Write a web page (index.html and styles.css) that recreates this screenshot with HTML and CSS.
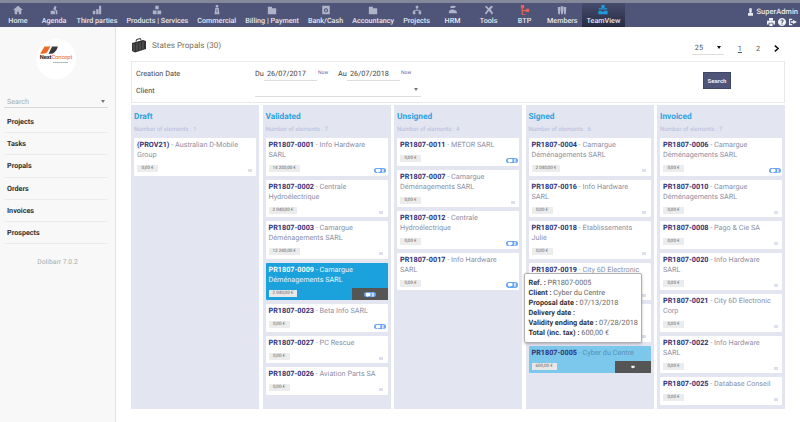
FILE: index.html
```html
<!DOCTYPE html>
<html lang="en">
<head>
<meta charset="utf-8">
<title>States Propals</title>
<link rel="stylesheet" href="styles.css">
</head>
<body>
<svg class="defs" width="0" height="0">
  <symbol id="chat" viewBox="0 0 12 6"><rect x="1.5" y="1" width="5" height="3.4" rx="1" fill="#fff"/><path d="M3 4h2L3 5.600z" fill="#fff"/><rect x="8.500" y="1" width="1.400" height="4" fill="#fff"/></symbol>
</svg>
<header class="nav">
  <a class="nav-item"><svg class="ni" viewBox="0 0 12 12"><path d="M6 1 0 6h2v5h3V8h2v3h3V6h2z"/></svg><span>Home</span></a>
  <a class="nav-item"><svg class="ni" viewBox="0 0 12 12"><path d="M2 7h5v4H2zM5 5l2-4 2 1-1 3 2 2v4H8V7z"/></svg><span>Agenda</span></a>
  <a class="nav-item"><svg class="ni" viewBox="0 0 12 12"><path d="M1 7h3v4H1zM5 5h3v6H5zM8.500 1H11v10H8.500z"/></svg><span>Third parties</span></a>
  <a class="nav-item"><svg class="ni" viewBox="0 0 12 12"><path d="M4 1h4v4H4zM1 6.500h4.500V11H1zM6.500 6.500H11V11H6.500z"/></svg><span>Products | Services</span></a>
  <a class="nav-item"><svg class="ni" viewBox="0 0 12 12"><path d="M4.500 0h3v3h-3zM4 3.500h4L9 11H3zM5.500 5v4h1V5z"/></svg><span>Commercial</span></a>
  <a class="nav-item"><svg class="ni" viewBox="0 0 12 12"><path d="M1 2h5v2h5v7H1z"/></svg><span>Billing | Payment</span></a>
  <a class="nav-item"><svg class="ni" viewBox="0 0 12 12"><path d="M1.500 1h9v10h-9zM6 4a2.500 2.500 0 1 0 .01 0zM6 5.200a1.300 1.300 0 1 1-.01 0z" fill-rule="evenodd"/></svg><span>Bank/Cash</span></a>
  <a class="nav-item"><svg class="ni" viewBox="0 0 12 12"><path d="M1 2h5v2h5v7H1z"/></svg><span>Accountancy</span></a>
  <a class="nav-item"><svg class="ni" viewBox="0 0 12 12"><path d="M4.500 1h3v3h-3zM1 7.500h3V11H1zM8 7.500h3V11H8zM5.500 4h1v2H10v1.500H9V7H3v.5H2V6h3.500z"/></svg><span>Projects</span></a>
  <a class="nav-item"><svg class="ni" viewBox="0 0 12 12"><path d="M3 1.500C5 .5 8 .5 10 2L7 3.500H3zM1 8c1-2.500 3-3 5-2.500L10 7l1 3H1z"/></svg><span>HRM</span></a>
  <a class="nav-item"><svg class="ni" viewBox="0 0 12 12"><path d="M1 2l2-1 2.500 3 3-3L11 2 8 5l3 5-1.500 1.500L6 7l-3.500 4.500L1 10l3.500-4.500z"/></svg><span>Tools</span></a>
  <a class="nav-item"><svg class="ni red" viewBox="0 0 12 12"><path d="M1 0h4v4H3.500v2H7V4.500h4v4H7V7.500H3.500V11H7v1H2V4H1z"/></svg><span>BTP</span></a>
  <a class="nav-item"><svg class="ni" viewBox="0 0 12 12"><path d="M1 2.500h3v3l-.5 5.500h-2L1 5.500zM4.500 1.500h3V6l-.5 5H5l-.5-5zM8 2.500h3v3l-.5 5.500h-2L8 5.500z"/></svg><span>Members</span></a>
  <a class="nav-item active"><svg class="ni blue" viewBox="0 0 12 12"><path d="M4 0h4v3.500H4zM1 4h10v1.500H1zM.5 7h4v1L7 8V7h4.500v4H.5z"/></svg><span>TeamView</span></a>
  <div class="user">
    <div class="user-name"><svg class="u-ic" viewBox="0 0 8 12"><path d="M2 0h4v6H5.500v1.500H8V12H0V7.500h2.500V6H2z"/></svg><span>SuperAdmin</span></div>
    <div class="user-tools">
      <svg class="t-ic" viewBox="0 0 10 10"><path d="M2.500 0h5v3h-5zM0 3.500h10V8H8V6H2v2H0zM3 6.800h4V10H3z"/></svg>
      <svg class="t-ic" viewBox="0 0 10 10"><path fill-rule="evenodd" d="M5 0a5 5 0 1 0 .01 0zM3 3.500C3.200 1.200 7 1.200 7 3.500 7 5 5.600 5 5.600 6.200H4.400C4.400 4.300 5.700 4.400 5.700 3.500 5.700 2.600 4.300 2.600 4.200 3.500zM4.400 7h1.200v1.300H4.400z"/></svg>
      <svg class="t-ic" viewBox="0 0 10 10"><path d="M0 1h4v1.500H1.500v5H4V9H0zM5 2.500l5 2.500-5 2.500V6H2.500V4H5z"/></svg>
    </div>
  </div>
</header>
<div class="layout">
  <aside class="side">
    <div class="logo">
      <svg class="logo-mark" viewBox="0 0 20 9"><path d="M5 .5H11.500L8 7C7 8.500 3 8.800 0 8.800z" fill="#ee6a22"/><path d="M13.500 .5H20C19 4.500 16 8 13 8.800H9.500z" fill="#3a3a3a"/></svg>
      <div class="logo-text"><b>Next</b><span>Concept</span></div>
      <i class="logo-tag"></i>
    </div>
    <div class="side-search"><span>Search</span><i class="caret"></i></div>
    <nav class="side-menu">
      <a>Projects</a><a>Tasks</a><a>Propals</a><a>Orders</a><a>Invoices</a><a>Prospects</a>
    </nav>
    <div class="version">Dolibarr 7.0.2</div>
  </aside>
  <main class="main">
    <div class="head">
      <div class="title">
        <svg class="brief" viewBox="0 0 16 15"><path d="M1 5l11-3 3 1v8L4 14.500 1 13z" fill="#333"/><path d="M5 3.500 5.500 1.500 9.500 .5 10 2.500" fill="none" stroke="#333"/><path d="M3 6v7M6 5.200v7.300M9 4.500V12M12 3.800V11" stroke="#777" stroke-width=".7"/></svg>
        <span>States Propals (30)</span>
      </div>
      <div class="pager">
        <div class="limit"><span>25</span><i class="caret dark"></i></div>
        <a class="page cur">1</a><a class="page">2</a>
        <svg class="next" viewBox="0 0 6 8"><path d="M1 .500 5 4 1 7.500" fill="none" stroke="#111" stroke-width="1.800"/></svg>
      </div>
    </div>
    <section class="filter">
      <div class="f-fields">
        <div class="f-row">
          <label class="f-label">Creation Date</label>
          <span class="f-du">Du</span><span class="f-in">26/07/2017</span><a class="f-new">Now</a>
          <span class="f-du au">Au</span><span class="f-in">26/07/2018</span><a class="f-new">Now</a>
        </div>
        <div class="f-row second">
          <label class="f-label">Client</label>
          <div class="f-sel"><i class="caret"></i></div>
        </div>
      </div>
      <button class="search">Search</button>
    </section>
    <section class="board">
      <div class="col">
        <h2>Draft</h2><p class="count">Number of elements : 1</p>
        <article class="card"><div class="t"><b>(PROV21)</b> - Australian D-Mobile Group</div><div class="foot"><span class="amt">0,00 €</span><i class="dot"></i></div></article>
      </div>
      <div class="col">
        <h2>Validated</h2><p class="count">Number of elements : 7</p>
        <article class="card"><div class="t"><b>PR1807-0001</b> - Info Hardware SARL</div><div class="foot"><span class="amt">14 280,00 €</span><svg class="pill"><use href="#chat"/></svg></div></article>
        <article class="card"><div class="t"><b>PR1807-0002</b> - Centrale Hydroélectrique</div><div class="foot"><span class="amt">2 040,00 €</span><i class="dot"></i></div></article>
        <article class="card"><div class="t"><b>PR1807-0003</b> - Camargue Déménagements SARL</div><div class="foot"><span class="amt">12 240,00 €</span><i class="dot"></i></div></article>
        <article class="card sel"><div class="t"><b>PR1807-0009</b> - Camargue Déménagements SARL</div><div class="foot"><span class="amt">2 040,00 €</span></div><div class="act"><svg class="pill"><use href="#chat"/></svg></div></article>
        <article class="card"><div class="t"><b>PR1807-0023</b> - Beta Info SARL</div><div class="foot"><span class="amt">0,00 €</span><svg class="pill"><use href="#chat"/></svg></div></article>
        <article class="card"><div class="t"><b>PR1807-0027</b> - PC Rescue</div><div class="foot"><span class="amt">0,00 €</span><i class="dot"></i></div></article>
        <article class="card"><div class="t"><b>PR1807-0026</b> - Aviation Parts SA</div><div class="foot"><span class="amt">0,00 €</span><i class="dot"></i></div></article>
      </div>
      <div class="col">
        <h2>Unsigned</h2><p class="count">Number of elements : 4</p>
        <article class="card"><div class="t"><b>PR1807-0011</b> - METOR SARL</div><div class="foot"><span class="amt">0,00 €</span><svg class="pill"><use href="#chat"/></svg></div></article>
        <article class="card"><div class="t"><b>PR1807-0007</b> - Camargue Déménagements SARL</div><div class="foot"><span class="amt">0,00 €</span><i class="dot"></i></div></article>
        <article class="card"><div class="t"><b>PR1807-0012</b> - Centrale Hydroélectrique</div><div class="foot"><span class="amt">0,00 €</span><svg class="pill"><use href="#chat"/></svg></div></article>
        <article class="card"><div class="t"><b>PR1807-0017</b> - Info Hardware SARL</div><div class="foot"><span class="amt">0,00 €</span><svg class="pill"><use href="#chat"/></svg></div></article>
      </div>
      <div class="col signed">
        <h2>Signed</h2><p class="count">Number of elements : 6</p>
        <article class="card"><div class="t"><b>PR1807-0004</b> - Camargue Déménagements SARL</div><div class="foot"><span class="amt">2 040,00 €</span><i class="dot"></i></div></article>
        <article class="card"><div class="t"><b>PR1807-0016</b> - Info Hardware SARL</div><div class="foot"><span class="amt">0,00 €</span><i class="dot"></i></div></article>
        <article class="card"><div class="t"><b>PR1807-0018</b> - Etablissements Julie</div><div class="foot"><span class="amt">0,00 €</span><i class="dot"></i></div></article>
        <article class="card"><div class="t"><b>PR1807-0019</b> - City 6D Electronic Corp</div><div class="foot"><span class="amt">0,00 €</span><i class="dot"></i></div></article>
        <article class="card"><div class="t"><b>&nbsp;</b><br>&nbsp;</div><div class="foot"><span class="amt"></span><i class="dot"></i></div></article>
        <article class="card hover"><div class="t"><b>PR1807-0005</b> - Cyber du Centre</div><div class="foot"><span class="amt">600,00 €</span></div><div class="act"><svg class="mini" viewBox="0 0 6 5"><path d="M.5 .5h5v3H3L1.500 4.800V3.500h-1z" fill="#fff"/></svg></div></article>
        <div class="tip">
          <div><b>Ref. :</b> PR1807-0005</div>
          <div><b>Client :</b> Cyber du Centre</div>
          <div><b>Proposal date :</b> 07/13/2018</div>
          <div><b>Delivery date :</b></div>
          <div><b>Validity ending date :</b> 07/28/2018</div>
          <div><b>Total (inc. tax) :</b> 600,00 €</div>
        </div>
      </div>
      <div class="col">
        <h2>Invoiced</h2><p class="count">Number of elements : 7</p>
        <article class="card"><div class="t"><b>PR1807-0006</b> - Camargue Déménagements SARL</div><div class="foot"><span class="amt">0,00 €</span><svg class="pill"><use href="#chat"/></svg></div></article>
        <article class="card"><div class="t"><b>PR1807-0010</b> - Camargue Déménagements SARL</div><div class="foot"><span class="amt">0,00 €</span><i class="dot"></i></div></article>
        <article class="card"><div class="t"><b>PR1807-0008</b> - Pago &amp; Cie SA</div><div class="foot"><span class="amt">0,00 €</span><i class="dot"></i></div></article>
        <article class="card"><div class="t"><b>PR1807-0020</b> - Info Hardware SARL</div><div class="foot"><span class="amt">0,00 €</span><i class="dot"></i></div></article>
        <article class="card"><div class="t"><b>PR1807-0021</b> - City 6D Electronic Corp</div><div class="foot"><span class="amt">0,00 €</span><i class="dot"></i></div></article>
        <article class="card"><div class="t"><b>PR1807-0022</b> - Info Hardware SARL</div><div class="foot"><span class="amt">0,00 €</span><i class="dot"></i></div></article>
        <article class="card"><div class="t"><b>PR1807-0025</b> - Database Conseil</div><div class="foot"><span class="amt">0,00 €</span><i class="dot"></i></div></article>
      </div>
    </section>
  </main>
</div>
</body>
</html>
```
FILE: styles.css
```css
* { box-sizing: border-box; }
html, body { margin: 0; height: 100%; }
body { width: 800px; height: 422px; overflow: hidden; background: #fff; font-family: Roboto, "Liberation Sans", sans-serif; color: #444; display: flex; flex-direction: column; text-rendering: geometricPrecision; }
.defs { position: absolute; }

.nav { height: 27px; flex: none; display: flex; background: #4e5578; border-top: 3px solid #85879a; }
.nav-item { min-width: 36px; padding: 0 4.5px; display: flex; flex-direction: column; align-items: center; color: #e6e8f0; font-size: 7.200px; font-weight: 500; white-space: nowrap; }
.nav-item span { line-height: 10px; margin-top: 1px; }
.ni { width: 10px; height: 10px; margin-top: 2px; fill: #b0b4c8; }
.ni.red { fill: #e2625c; }
.ni.blue { fill: #1d9be0; }
.nav-item.active { background: linear-gradient(#454c6c, #282c42); }
.user { margin-left: auto; padding: 3px 2px 0 0; color: #e6e8f0; font-size: 7.500px; font-weight: 500; display: flex; flex-direction: column; align-items: flex-end; }
.user-name { display: flex; align-items: center; gap: 4px; height: 11px; }
.u-ic { width: 5px; height: 8px; fill: #e6e8f0; }
.user-tools { display: flex; gap: 3px; margin-top: 1px; padding-right: 1px; }
.t-ic { width: 8px; height: 8px; fill: #f2f3f7; }

.layout { flex: 1; display: flex; min-height: 0; }
.side { width: 116px; flex: none; background: #f8f8f8; border-right: 1px solid #e3e3e3; padding: 12px 7px 0 4px; }
.logo { width: 40px; height: 40px; border-radius: 50%; background: #fff; margin-left: 32px; padding-top: 7px; display: flex; flex-direction: column; align-items: center; }
.logo-mark { width: 18px; height: 8px; display: block; margin-right: 14px; }
.logo-text { font-size: 5.800px; line-height: 6px; margin-top: 1px; color: #e8662a; white-space: nowrap; letter-spacing: -.1px; }
.logo-text b { color: #222; }
.logo-tag { width: 15px; height: 1px; margin-top: 1px; margin-left: 8px; background: #bbb; }
.side-search { margin-top: 13px; height: 16px; border-bottom: 1px solid #d8d8d8; padding: 3px 3px 0 3px; display: flex; justify-content: space-between; align-items: center; color: #aaa; font-size: 7.200px; }
.caret { display: block; width: 0; height: 0; border: 2.500px solid transparent; border-top: 3px solid #777; border-bottom: 0; }
.caret.dark { border-top-color: #111; }
.side-menu { display: flex; flex-direction: column; margin-top: 3px; }
.side-menu a { height: 22.200px; line-height: 21px; padding-left: 3px; font-size: 7.200px; font-weight: 700; color: #333; border-bottom: 1px solid #ececec; }
.version { margin-top: 14px; text-align: center; font-size: 6.800px; color: #aaa; padding-left: 3px; }

.main { flex: 1; min-width: 0; padding: 0 15px 0 15px; display: flex; flex-direction: column; }
.head { height: 34px; flex: none; display: flex; justify-content: space-between; }
.title { display: flex; align-items: center; gap: 5px; height: 14px; margin-top: 11px; font-size: 8.100px; color: #776f60; }
.brief { width: 16px; height: 15px; }
.pager { display: flex; align-items: center; height: 14px; margin-top: 14px; padding-right: 6px; font-size: 7.300px; color: #555; }
.limit { width: 32px; height: 14px; border-bottom: 1px solid #ddd; padding: 0 3px; margin-right: 14px; display: flex; justify-content: space-between; align-items: center; }
.page { margin-right: 14px; }
.page.cur { text-decoration: underline; }
.next { width: 5px; height: 7px; margin-left: 0; }

.filter { height: 42px; flex: none; border: 1px solid #e9e9e9; display: flex; justify-content: space-between; padding: 0 53px 0 4px; }
.f-fields { display: flex; flex-direction: column; width: 420px; }
.f-row { display: flex; align-items: center; height: 17px; margin-top: 3px; font-size: 7.300px; color: #444; }
.f-row.second { margin-top: 0; height: 16px; }
.f-label { width: 119px; }
.f-du { width: 9px; }
.f-du.au { margin-left: 11px; }
.f-in { width: 53px; height: 14px; line-height: 13px; padding-left: 3px; border-bottom: 1px solid #ddd; }
.f-new { width: 0; font-size: 5px; color: #6a5fa8; margin-left: 1px; white-space: nowrap; margin-right: 9px; margin-top: -1px; }
.f-sel { width: 166px; height: 14px; border-bottom: 1px solid #ddd; padding: 0 3px; display: flex; justify-content: flex-end; align-items: center; }
.search { width: 28px; height: 17px; margin-top: 10px; padding: 0; border: 1px solid #3f4564; background: #4e5578; color: #eceef5; font: 700 6px Roboto, sans-serif; }

.board { flex: none; height: 304px; margin-top: 2px; display: grid; grid-template-columns: repeat(5, 128px); gap: 3.500px; }
.col { background: #e3e5f1; padding: 7px 3px 0 3px; display: flex; flex-direction: column; gap: 4px; position: relative; }
.col h2 { margin: 0; font-size: 8.300px; line-height: 11px; font-weight: 700; color: #2ea3e0; }
.count { margin: 0; font-size: 6px; line-height: 8px; color: #b6bcdc; height: 6px; }
.col h2 + .count { margin-top: -1px; margin-bottom: 2px; }

.card { position: relative; background: #fff; border-radius: 1px; padding: 2px 3px 3.500px; font-size: 7.250px; line-height: 10px; color: #8c90a5; }
.t { padding-right: 6px; }
.card b { color: #2f3278; font-weight: 700; }
.foot { display: flex; justify-content: space-between; align-items: flex-end; margin: 5px -1.500px 0 0; height: 7px; }
.amt { display: block; height: 7px; min-width: 21px; line-height: 7px; padding: 0 4px; font-size: 4.500px; text-align: center; background: #ececec; color: #666; white-space: nowrap; }
.dot { width: 4px; height: 3px; margin-right: 3px; background: #dcdfec; }
.pill { display: block; width: 12px; height: 5.500px; background: #6aa6f0; border-radius: 3px; margin-bottom: -1px; }
.card.sel { background: #1ba1dc; color: #e8f4fb; }
.card.sel b { color: #f4f9fd; }
.card.sel .amt { background: #e8e8e8; }
.card.hover { background: #7cc8ec; color: #5a8fb0; }
.card.hover .amt { background: #e8e8e8; }
.act { position: absolute; right: 0; bottom: 0; width: 36px; height: 12px; background: #555; display: flex; align-items: center; justify-content: center; }
.mini { width: 4px; height: 4px; }
.tip { position: absolute; left: -2px; top: 168px; width: 118px; height: 70px; background: #fff; border: 1px solid #b0b0b0; border-radius: 2px; box-shadow: 0 1px 3px rgba(0,0,0,.25); padding: 4px 4px 0 4px; font-size: 7.300px; line-height: 10px; color: #666; white-space: nowrap; }
.tip b { color: #333; font-weight: 700; }
```
